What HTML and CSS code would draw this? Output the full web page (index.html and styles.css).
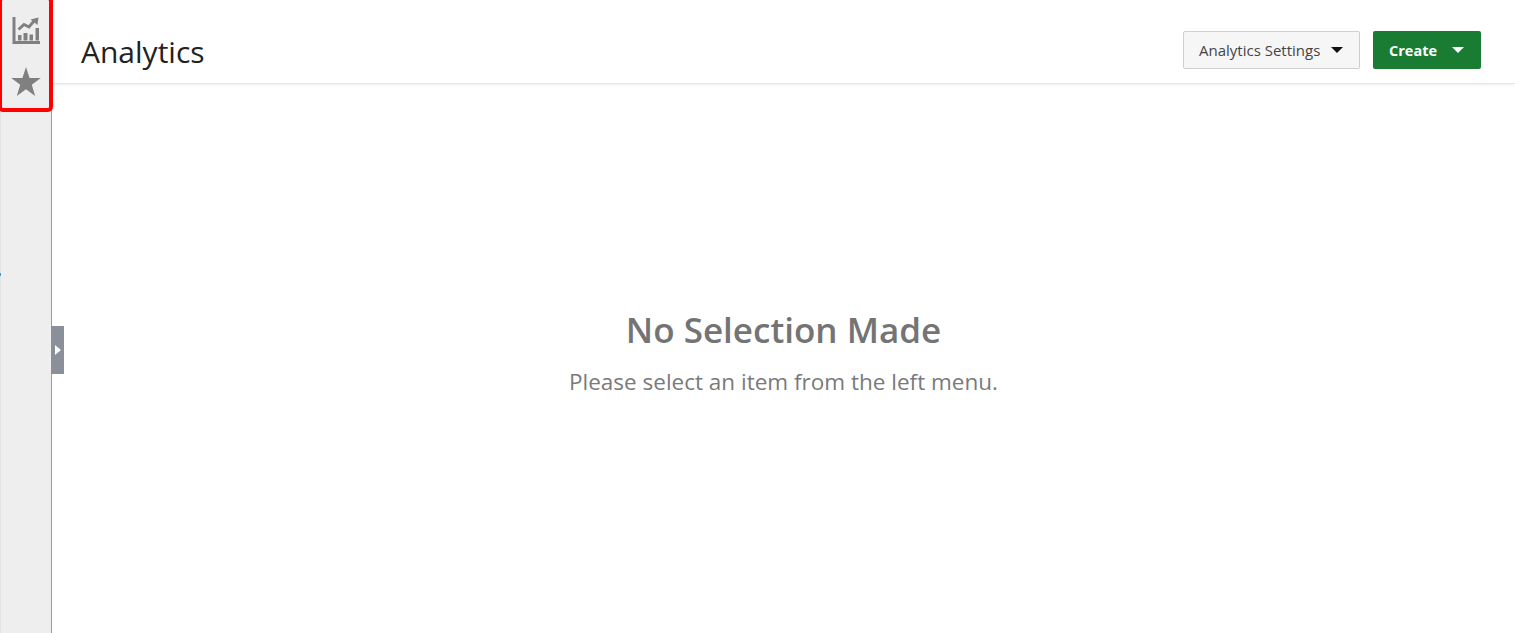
FILE: index.html
```html
<!DOCTYPE html>
<html lang="en">
<head>
<meta charset="utf-8">
<title>Analytics</title>
<link rel="stylesheet" href="styles.css">
</head>
<body>
<div class="app">
  <aside class="rail">
    <div class="rail-icons">
      <svg class="icon-chart" width="28" height="27" viewBox="0 0 28 27">
        <path class="solid" d="M.5 0h3v24H28v3H.5z"/>
        <path class="solid" d="M6 18h3.500v5.500H6zM11.500 16h4v7.500h-4zM17.500 17.500H21v6h-3.500zM23.500 11H27v12.500h-3.500z"/>
        <path class="line" d="M6.500 12.500L12 7.500l5 2.500 5-6"/>
        <path class="solid" d="M18.500 2.500L26.500.5l-1 7.500z"/>
      </svg>
      <svg class="icon-star" width="30" height="30" viewBox="0 0 30 30">
        <path class="solid" d="M15 0l3.600 10.900h11.200l-9 6.800 3.400 11.300-9.200-6.800-9.200 6.800 3.400-11.300-9-6.800h11.200z"/>
      </svg>
    </div>
    <button class="rail-toggle" type="button" aria-label="Expand"><span class="toggle-arrow"></span></button>
    <span class="rail-tick"></span>
  </aside>
  <main class="main">
    <header class="topbar">
      <h1 class="title">Analytics</h1>
      <div class="actions">
        <button class="btn btn-default" type="button">Analytics Settings<span class="caret caret-dark"></span></button>
        <button class="btn btn-primary" type="button">Create<span class="caret caret-light"></span></button>
      </div>
    </header>
    <section class="empty">
      <h2 class="empty-title">No Selection Made</h2>
      <p class="empty-text">Please select an item from the left menu.</p>
    </section>
  </main>
</div>
</body>
</html>
```
FILE: styles.css
```css
* { box-sizing: border-box; }
html, body { margin: 0; height: 100%; background: #fff; overflow: hidden; }
body { font-family: "Open Sans", "Noto Sans", sans-serif; }
.app { display: flex; height: 633px; }
.rail {
  position: relative;
  width: 52px;
  flex: none;
  background: #eeeeee;
  border-left: 1px solid #e2e2e2;
  border-right: 1px solid #9b9b9b;
}
.rail-icons {
  position: absolute;
  left: -3px;
  top: -4px;
  width: 55px;
  height: 116px;
  border: 4px solid #fe0000;
  border-radius: 5px;
  display: flex;
  flex-direction: column;
  align-items: center;
  gap: 23px;
  padding-top: 17px;
  z-index: 2;
}
.solid { fill: #808080; }
.line { fill: none; stroke: #808080; stroke-width: 3; }
.rail-toggle {
  position: absolute;
  left: 50px;
  top: 326px;
  width: 13px;
  height: 48px;
  padding: 0;
  border: 0;
  background: #8a9099;
  display: flex;
  align-items: center;
  justify-content: center;
}
.toggle-arrow {
  width: 0;
  height: 0;
  border-left: 6px solid #fff;
  border-top: 5px solid transparent;
  border-bottom: 5px solid transparent;
}
.rail-tick {
  position: absolute;
  left: -1px;
  top: 273px;
  width: 1px;
  height: 3px;
  background: #2a9df4;
}
.main { flex: 1; min-width: 0; display: flex; flex-direction: column; }
.topbar {
  height: 84px;
  flex: none;
  display: flex;
  align-items: flex-start;
  justify-content: space-between;
  padding: 31px 34px 0 29px;
  border-bottom: 1px solid #e8e8e8;
  box-shadow: 0 1px 3px rgba(0, 0, 0, 0.08);
}
.title {
  margin: 0;
  font-size: 30px;
  line-height: 42px;
  font-weight: 400;
  color: #222;
}
.actions { display: flex; gap: 13px; }
.btn {
  height: 38px;
  border-radius: 2px;
  font-family: inherit;
  font-size: 15px;
  padding: 0;
  display: flex;
  align-items: center;
}
.btn-default {
  width: 177px;
  padding-left: 15px;
  background: #f6f6f6;
  border: 1px solid #cfcfcf;
  color: #444;
}
.btn-primary {
  width: 108px;
  padding-left: 16px;
  background: #1a7b33;
  border: 0;
  color: #fff;
  font-size: 14.500px;
  font-weight: 700;
}
.caret {
  width: 0;
  height: 0;
  border-left: 6.500px solid transparent;
  border-right: 6.500px solid transparent;
  border-top: 6.500px solid #111;
}
.caret-dark { margin-left: 11px; }
.caret-light { margin-left: 15px; border-top-color: #fff; }
.empty {
  flex: 1;
  display: flex;
  flex-direction: column;
  align-items: center;
  padding-top: 223px;
}
.empty-title {
  margin: 0;
  font-size: 35px;
  line-height: 46px;
  font-weight: 600;
  color: #747474;
}
.empty-text {
  margin: 13px 0 0;
  font-size: 22.500px;
  line-height: 32px;
  color: #7a7a7a;
}
```
